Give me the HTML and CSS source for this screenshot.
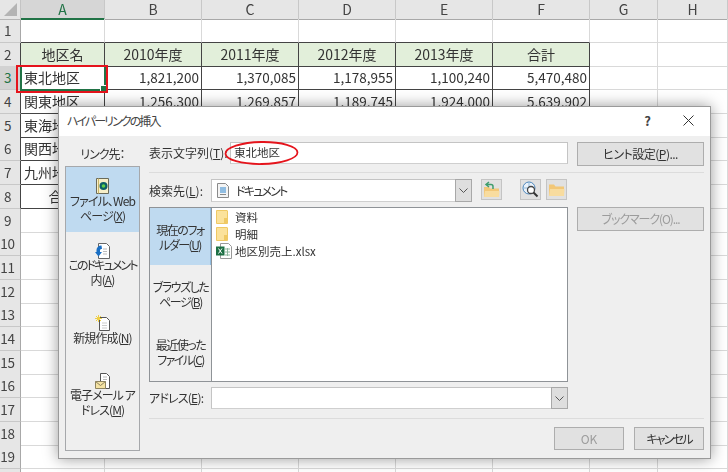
FILE: index.html
```html
<!DOCTYPE html>
<html lang="ja">
<head>
	<meta charset="UTF-8">
	<title>ハイパーリンクの挿入</title>
	<link rel="stylesheet" href="styles.css">
</head>
<body>
<div class="sheet">
	<div class="row head">
		<div class="corner"></div><div class="col sel">A</div><div class="col">B</div><div class="col">C</div><div class="col">D</div><div class="col">E</div><div class="col">F</div><div class="col">G</div><div class="col">H</div>
	</div>
	<div class="row"><div class="num">1</div><div class="c up"></div><div class="c up"></div><div class="c up"></div><div class="c up"></div><div class="c up"></div><div class="c up"></div><div class="c"></div><div class="c"></div></div>
	<div class="row"><div class="num edge">2</div><div class="c t th">地区名</div><div class="c t th">2010年度</div><div class="c t th">2011年度</div><div class="c t th">2012年度</div><div class="c t th">2013年度</div><div class="c t th">合計</div><div class="c"></div><div class="c"></div></div>
	<div class="row"><div class="num edge cur">3</div><div class="c t active">東北地区</div><div class="c t n">1,821,200</div><div class="c t n">1,370,085</div><div class="c t n">1,178,955</div><div class="c t n">1,100,240</div><div class="c t n">5,470,480</div><div class="c"></div><div class="c"></div></div>
	<div class="row"><div class="num edge">4</div><div class="c t">関東地区</div><div class="c t n">1,256,300</div><div class="c t n">1,269,857</div><div class="c t n">1,189,745</div><div class="c t n">1,924,000</div><div class="c t n">5,639,902</div><div class="c"></div><div class="c"></div></div>
	<div class="row"><div class="num edge">5</div><div class="c t">東海地区</div><div class="c t"></div><div class="c t"></div><div class="c t"></div><div class="c t"></div><div class="c t"></div><div class="c"></div><div class="c"></div></div>
	<div class="row"><div class="num edge">6</div><div class="c t">関西地区</div><div class="c t"></div><div class="c t"></div><div class="c t"></div><div class="c t"></div><div class="c t"></div><div class="c"></div><div class="c"></div></div>
	<div class="row"><div class="num edge">7</div><div class="c t">九州地区</div><div class="c t"></div><div class="c t"></div><div class="c t"></div><div class="c t"></div><div class="c t"></div><div class="c"></div><div class="c"></div></div>
	<div class="row"><div class="num edge">8</div><div class="c t mid">合計</div><div class="c t"></div><div class="c t"></div><div class="c t"></div><div class="c t"></div><div class="c t"></div><div class="c"></div><div class="c"></div></div>
	<div class="row"><div class="num">9</div><div class="c"></div><div class="c"></div><div class="c"></div><div class="c"></div><div class="c"></div><div class="c"></div><div class="c"></div><div class="c"></div></div>
	<div class="row"><div class="num">10</div><div class="c"></div><div class="c"></div><div class="c"></div><div class="c"></div><div class="c"></div><div class="c"></div><div class="c"></div><div class="c"></div></div>
	<div class="row"><div class="num">11</div><div class="c"></div><div class="c"></div><div class="c"></div><div class="c"></div><div class="c"></div><div class="c"></div><div class="c"></div><div class="c"></div></div>
	<div class="row"><div class="num">12</div><div class="c"></div><div class="c"></div><div class="c"></div><div class="c"></div><div class="c"></div><div class="c"></div><div class="c"></div><div class="c"></div></div>
	<div class="row"><div class="num">13</div><div class="c"></div><div class="c"></div><div class="c"></div><div class="c"></div><div class="c"></div><div class="c"></div><div class="c"></div><div class="c"></div></div>
	<div class="row"><div class="num">14</div><div class="c"></div><div class="c"></div><div class="c"></div><div class="c"></div><div class="c"></div><div class="c"></div><div class="c"></div><div class="c"></div></div>
	<div class="row"><div class="num">15</div><div class="c"></div><div class="c"></div><div class="c"></div><div class="c"></div><div class="c"></div><div class="c"></div><div class="c"></div><div class="c"></div></div>
	<div class="row"><div class="num">16</div><div class="c"></div><div class="c"></div><div class="c"></div><div class="c"></div><div class="c"></div><div class="c"></div><div class="c"></div><div class="c"></div></div>
	<div class="row"><div class="num">17</div><div class="c"></div><div class="c"></div><div class="c"></div><div class="c"></div><div class="c"></div><div class="c"></div><div class="c"></div><div class="c"></div></div>
	<div class="row"><div class="num">18</div><div class="c"></div><div class="c"></div><div class="c"></div><div class="c"></div><div class="c"></div><div class="c"></div><div class="c"></div><div class="c"></div></div>
	<div class="row"><div class="num">19</div><div class="c"></div><div class="c"></div><div class="c"></div><div class="c"></div><div class="c"></div><div class="c"></div><div class="c"></div><div class="c"></div></div>
	<div class="row"><div class="num"></div><div class="c"></div><div class="c"></div><div class="c"></div><div class="c"></div><div class="c"></div><div class="c"></div><div class="c"></div><div class="c"></div></div>
	<div class="red-box"></div>
</div>

<div class="dlg">
	<div class="dlg-title">
		<span class="dlg-name">ハイパーリンクの挿入</span>
		<span class="dlg-help">?</span>
		<svg class="dlg-close" width="11" height="11" viewBox="0 0 11 11"><path d="M.5.5l10 10M10.5.5l-10 10" stroke="#333" fill="none"/></svg>
	</div>
	<div class="dlg-body">
		<div class="side">
			<div class="side-label">リンク先：</div>
			<div class="side-list">
				<div class="side-item sel">
					<svg class="side-icon" width="16" height="16" viewBox="0 0 16 16"><path d="M1.500.5h12v15h-12z" fill="#f8efc8" stroke="#6b6b5a"/><path d="M3.500.5v15" stroke="#c9b567"/><circle cx="8.500" cy="8" r="4" fill="#0d5f66"/><circle cx="8.500" cy="8" r="1.800" fill="#5ed04a"/></svg>
					<div>ファイル、Web<br>ページ(<u>X</u>)</div>
				</div>
				<div class="side-item">
					<svg class="side-icon" width="16" height="16" viewBox="0 0 16 16"><path d="M3.500.5h8l3 3v12h-11z" fill="#fff" stroke="#666"/><path d="M8 6h4M8 8.500h4M8 11h4" stroke="#bbb"/><path d="M6.500 2.500a4.500 4.500 0 0 0-5 4.500v2H0l3.500 4.500L7 9H5V7.500C5 6.500 5.500 6 7 6z" fill="#1a6fc4"/></svg>
					<div><span class="kana">このドキュメント</span><br>内(<u>A</u>)</div>
				</div>
				<div class="side-item">
					<svg class="side-icon" width="16" height="16" viewBox="0 0 16 16"><path d="M4.500 2.500h7l3 3v10h-10z" fill="#fff" stroke="#555"/><path d="M7 8h5M7 10.500h5M7 13h5" stroke="#ccc"/><path d="M3.500 0v7M0 3.500h7M1 1l5 5M6 1L1 6" stroke="#efcf45"/></svg>
					<div>新規作成(<u>N</u>)</div>
				</div>
				<div class="side-item">
					<svg class="side-icon" width="16" height="16" viewBox="0 0 16 16"><path d="M5.500.5h6l3 3v12h-9z" fill="#fff" stroke="#555"/><path d="M8 4h4M8 6.500h4" stroke="#bbb"/><path d="M.5 8.500h10v7H.5z" fill="#f5e3a3" stroke="#8e8460"/><path d="M.5 8.500l5 4 5-4" fill="none" stroke="#8e8460"/></svg>
					<div>電子メール ア<br>ドレス(<u>M</u>)</div>
				</div>
			</div>
		</div>
		<div class="main">
			<div class="line text-line">
				<div class="text-label">表示文字列(<u>T</u>):</div>
				<div class="input text-input">東北地区</div>
				<div class="btn wide hint">ヒント設定(<u>P</u>)...</div>
			</div>
			<div class="rule"></div>
			<div class="line look-line">
				<div class="label">検索先(<u>L</u>):</div>
				<div class="input look">
					<svg class="doc-icon" width="12" height="15" viewBox="0 0 12 15"><path d="M.5.5h8l3 3v11H.5z" fill="#f4f4f4" stroke="#8a8a8a"/><path d="M3 5h6M3 7h6M3 9h6" stroke="#2d86d0"/><path d="M3 11.500h6" stroke="#888"/></svg>
					<span class="grow kana">ドキュメント</span>
					<span class="arrow"><svg width="9" height="5" viewBox="0 0 9 5"><path d="M.5.5l4 4 4-4" stroke="#555" fill="none"/></svg></span>
				</div>
				<div class="tool first">
					<svg width="17" height="17" viewBox="0 0 17 17"><path d="M1 6h5l1 1.500h9V16H1z" fill="#f2c777"/><path d="M2 10h14.500L16 16H1z" fill="#f8dc9f"/><path d="M6 1L3 3.500 6 6M3.500 3.500H8a2 2 0 0 1 2 2V8" fill="none" stroke="#3f9d6d" stroke-width="1.500"/></svg>
				</div>
				<div class="tool second">
					<svg width="17" height="17" viewBox="0 0 17 17"><circle cx="7" cy="7" r="6" fill="#eaf2fa" stroke="#4a86bd"/><path d="M1 7h12M7 1v12" stroke="#8fb6d8"/><circle cx="9" cy="9" r="3.500" fill="#fff" stroke="#444" stroke-width="1.300"/><path d="M11.500 11.500l4 4" stroke="#333" stroke-width="2"/></svg>
				</div>
				<div class="tool">
					<svg width="17" height="14" viewBox="0 0 17 14"><path d="M1 1.500h5l1.500 2H16V13H1z" fill="#f2c777"/><path d="M2 6h14.500L16 13H1z" fill="#f8dc9f"/></svg>
				</div>
			</div>
			<div class="line browse">
				<div class="tabs">
					<div class="tab sel"><div>現在のフォ<br>ルダー(<u>U</u>)</div></div>
					<div class="tab"><div>ブラウズした<br>ページ(<u>B</u>)</div></div>
					<div class="tab"><div>最近使った<br>ファイル(<u>C</u>)</div></div>
				</div>
				<div class="files">
					<div class="file"><span class="folder"></span>資料</div>
					<div class="file"><span class="folder"></span>明細</div>
					<div class="file">
						<svg class="xls" width="16" height="16" viewBox="0 0 16 16"><path d="M4.500.5h8l3 3v12h-11z" fill="#fff" stroke="#999"/><path d="M9 6h5M9 9h5M9 12h5M11.500 5v8" stroke="#8fb89f"/><path d="M0 3.500h8.500v9H0z" fill="#1d7044"/><path d="M2.500 5.500l3.500 5M6 5.500l-3.500 5" stroke="#fff"/></svg>
						<span>地区別売上.xlsx</span>
					</div>
				</div>
				<div class="btn wide bookmark off">ブックマーク(O)...</div>
			</div>
			<div class="line addr-line">
				<div class="label addr-label">アドレス(<u>E</u>):</div>
				<div class="input addr">
					<span class="grow"></span>
					<span class="arrow"><svg width="9" height="5" viewBox="0 0 9 5"><path d="M.5.5l4 4 4-4" stroke="#555" fill="none"/></svg></span>
				</div>
			</div>
			<div class="rule low"></div>
			<div class="foot">
				<div class="btn small off">OK</div>
				<div class="btn small"><span class="kana">キャンセル</span></div>
			</div>
		</div>
	</div>
	<svg class="red-ring" width="78" height="28" viewBox="0 0 78 28"><ellipse cx="38.500" cy="14" rx="36" ry="11" transform="rotate(-1 39 14)" fill="none" stroke="#e5141c" stroke-width="1.800"/></svg>
</div>
</body>
</html>
```

FILE: styles.css
```css
html, body {
	margin:0;
	padding:0;
}
body {
	width:728px;
	height:472px;
	overflow:hidden;
	background:#fff;
	color:#333;
	font-family:"Noto Sans CJK JP", "Noto Sans", sans-serif;
	font-feature-settings:"palt";
	filter:blur(0.35px);
}
* {
	box-sizing:border-box;
}
.kana {
	letter-spacing:-1.800px;
}

/* spreadsheet */
.sheet {
	position:relative;
	font-size:14px;
}
.row {
	display:grid;
	grid-template-columns:21px 84px 97px 97px 97px 97px 97px 68px 70px;
	height:23.7px;
}
.row.head {
	height:19px;
}
.corner {
	background:#e6e6e6;
	border-right:1px solid #c4c4c4;
	border-bottom:1px solid #b5b5b5;
	position:relative;
}
.corner::after {
	content:"";
	position:absolute;
	right:3px;
	bottom:3px;
	border-style:solid;
	border-width:0 0 13px 13px;
	border-color:transparent transparent #b4b4b4 transparent;
}
.col {
	background:#e6e6e6;
	border-right:1px solid #c8c8c8;
	border-bottom:1px solid #a8a8a8;
	text-align:center;
	line-height:18px;
	color:#444;
}
.col.sel {
	color:#217346;
	background:#d6d6d6;
	border-bottom:2px solid #217346;
}
.num {
	background:#e6e6e6;
	border-right:1px solid #a8a8a8;
	border-bottom:1px solid #c8c8c8;
	padding-right:5px;
	text-align:center;
	line-height:23px;
	color:#444;
	font-size:13.5px;
	letter-spacing:-0.3px;
}
.num.edge {
	border-right-color:#444;
}
.num.cur {
	background:#d2d2d2;
	color:#217346;
}
.c {
	border-right:1px solid #d9d9d9;
	border-bottom:1px solid #d9d9d9;
	line-height:23px;
	white-space:nowrap;
	overflow:hidden;
}
.c.up {
	border-bottom-color:#444;
}
.c.t {
	border-color:#444;
	padding-left:3px;
}
.c.th {
	background:#e2efda;
	text-align:center;
	padding:0;
}
.c.n {
	text-align:right;
	padding:0 2px 0 0;
	font-size:13.5px;
	font-feature-settings:normal;
}
.c.mid {
	text-align:center;
	padding:0;
}
.c.active {
	position:relative;
	overflow:visible;
	outline:2px solid #217346;
	outline-offset:-1px;
}
.c.active::after {
	content:"";
	position:absolute;
	right:-3px;
	bottom:-3px;
	width:5px;
	height:5px;
	background:#217346;
	border:1px solid #fff;
}
.red-box {
	position:absolute;
	left:16px;
	top:65px;
	width:92px;
	height:28px;
	border:2.5px solid #e5141c;
}

/* dialog */
.dlg {
	position:absolute;
	left:58px;
	top:106px;
	width:653px;
	height:353px;
	display:flex;
	flex-direction:column;
	background:#efefef;
	border:1px solid #9a9a9a;
	box-shadow:0 0 14px rgba(0,0,0,0.4);
	font-size:12px;
	color:#333;
}
.dlg u {
	text-underline-offset:1px;
}
.dlg-title {
	display:flex;
	align-items:center;
	height:29px;
	flex:none;
	padding:0 16px 2px 8px;
	background:#fff;
	color:#444;
}
.dlg-name {
	flex:1;
	letter-spacing:-1.900px;
}
.dlg-help {
	margin-right:32px;
	font-size:13px;
	font-weight:700;
}
.dlg-body {
	flex:1;
	display:flex;
	padding:0 6px 7px;
	min-height:0;
}
.side {
	width:75px;
	flex:none;
	display:flex;
	flex-direction:column;
}
.side-label {
	height:30px;
	line-height:35px;
	text-align:center;
	letter-spacing:-1px;
}
.side-list {
	flex:1;
	border:1px solid #a6a8ab;
	text-align:center;
	line-height:15px;
}
.side-item {
	padding:11px 0 9px;
	margin-bottom:8px;
	white-space:nowrap;
	letter-spacing:-0.900px;
}
.side-item .kana {
	letter-spacing:-1.900px;
}
.side-item.sel {
	background:#bfdaf0;
	margin-bottom:0;
}
.side-icon {
	display:block;
	height:16px;
	margin:0 auto -1.500px;
}
.main {
	flex:1;
	margin-left:9px;
	display:flex;
	flex-direction:column;
	min-width:0;
}
.line {
	display:flex;
	flex:none;
}
.text-line {
	margin-top:6px;
	height:24px;
}
.text-label {
	width:81px;
	line-height:21px;
	white-space:nowrap;
}
.label {
	width:62px;
	line-height:23px;
	white-space:nowrap;
}
.addr-label {
	line-height:22px;
	letter-spacing:-0.800px;
}
.input {
	background:#fff;
	border:1px solid #c4c4c4;
	border-bottom-color:#cfcfcf;
}
.text-input {
	width:338px;
	height:22px;
	padding-left:3px;
	line-height:19px;
	font-size:11.500px;
}
.btn {
	background:#e1e1e1;
	border:1px solid #adadad;
	text-align:center;
	white-space:nowrap;
}
.btn.off {
	color:#9c9c9c;
}
.btn.wide {
	width:127px;
	height:24px;
	line-height:22px;
	margin-left:9px;
}
.btn.hint {
	letter-spacing:-0.500px;
}
.rule {
	height:1px;
	margin-top:6px;
	background:#dcdcdc;
	flex:none;
}
.look-line {
	margin-top:6px;
	height:23px;
}
.look {
	display:flex;
	align-items:center;
	width:261px;
	height:23px;
	padding-left:5px;
}
.addr {
	display:flex;
	align-items:center;
	width:357px;
	height:22px;
}
.grow {
	flex:1;
	white-space:nowrap;
}
.doc-icon {
	margin-right:7px;
}
.arrow {
	width:17px;
	align-self:stretch;
	margin:-1px -1px -1px 0;
	display:flex;
	align-items:center;
	justify-content:center;
	background:#dedede;
	border:1px solid #a8a8a8;
}
.tool {
	width:21px;
	height:21px;
	margin-left:5px;
	background:#e1e1e1;
	border:1px solid #c4c4c4;
	display:flex;
	align-items:center;
	justify-content:center;
}
.tool.first {
	margin-left:9px;
}
.tool.second {
	margin-left:18px;
}
.browse {
	margin-top:5px;
	height:175px;
}
.tabs {
	width:62px;
	flex:none;
	display:flex;
	flex-direction:column;
	border:1px solid #8f9397;
	border-right:none;
	text-align:center;
	line-height:15px;
	letter-spacing:-1.500px;
}
.tab {
	flex:1;
	display:flex;
	align-items:center;
	justify-content:center;
	white-space:nowrap;
}
.tab.sel {
	background:#bfdaf0;
	flex:none;
	height:57px;
	border-right:1px solid #8fbce0;
}
.files {
	width:357px;
	flex:none;
	background:#fff;
	border:1px solid #8f9397;
	font-size:11.500px;
}
.file {
	display:flex;
	align-items:center;
	height:17px;
	padding-left:4px;
	white-space:nowrap;
}
.folder {
	width:12px;
	height:14px;
	margin-right:7px;
	background:linear-gradient(#efc964, #efc964) right bottom / 3px 5px no-repeat, #fbe29b;
	border:1px solid #efc964;
	border-top-right-radius:1px;
}
.xls {
	margin-right:3px;
}
.bookmark {
	height:23px;
	letter-spacing:-1.100px;
}
.addr-line {
	margin-top:5px;
	height:22px;
}
.rule.low {
	margin-top:9px;
}
.foot {
	display:flex;
	justify-content:flex-end;
	margin-top:8px;
	gap:10px;
}
.btn.small {
	width:70px;
	height:23px;
	line-height:21px;
}
.red-ring {
	position:absolute;
	left:164px;
	top:32px;
}
```
